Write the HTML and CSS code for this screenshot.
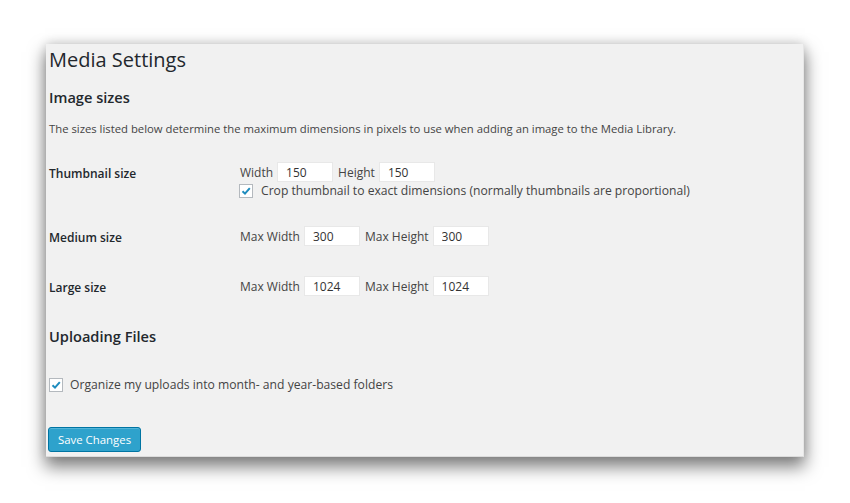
FILE: index.html
```html
<!DOCTYPE html>
<html lang="en">
<head>
  <meta charset="UTF-8" />
  <title>Media Settings</title>
  <link rel="stylesheet" href="styles.css">
</head>
<body>
  <div class="wrap">
    <h1>Media Settings</h1>

    <h3>Image sizes</h3>
    <p class="desc">The sizes listed below determine the maximum dimensions in pixels to use when adding an image to the Media Library.</p>

    <div class="row thumb">
      <div class="label">Thumbnail size</div>
      <div class="field">
        <div class="line">
          <span>Width</span><input type="text" value="150" class="small">
          <span>Height</span><input type="text" value="150" class="small">
        </div>
        <label class="check">
          <span class="box"><svg width="12" height="12" viewBox="0 0 12 12"><path d="M2.5 6.2 L5 8.6 L9.8 3.2" fill="none" stroke="#1e8cbe" stroke-width="2"/></svg></span>
          Crop thumbnail to exact dimensions (normally thumbnails are proportional)
        </label>
      </div>
    </div>

    <div class="row medium">
      <div class="label">Medium size</div>
      <div class="field">
        <div class="line">
          <span>Max Width</span><input type="text" value="300" class="small">
          <span>Max Height</span><input type="text" value="300" class="small">
        </div>
      </div>
    </div>

    <div class="row large">
      <div class="label">Large size</div>
      <div class="field">
        <div class="line">
          <span>Max Width</span><input type="text" value="1024" class="small">
          <span>Max Height</span><input type="text" value="1024" class="small">
        </div>
      </div>
    </div>

    <h3 class="uploads">Uploading Files</h3>
    <label class="check folders">
      <span class="box"><svg width="12" height="12" viewBox="0 0 12 12"><path d="M2.5 6.2 L5 8.6 L9.8 3.2" fill="none" stroke="#1e8cbe" stroke-width="2"/></svg></span>
      Organize my uploads into month- and year-based folders
    </label>

    <button type="button">Save Changes</button>
  </div>
</body>
</html>
```

FILE: styles.css
```css
html {
  background: #fff;
}
body {
  margin: 0;
  min-height: 503px;
  box-sizing: border-box;
  background: #fff;
  font-family: "Open Sans", sans-serif;
  color: #444;
  padding: 44px 0 46px 46px;
}
.wrap {
  width: 758px;
  height: 413px;
  padding-left: 3px;
  background: #f1f1f1;
  border-right: 1px solid #e6e6e6;
  border-bottom: 1px solid #dcdcdc;
  box-shadow: 0 9px 16px 1px rgba(0, 0, 0, 0.5), 0 -2px 10px rgba(0, 0, 0, 0.12);
  box-sizing: border-box;
}
h1 {
  margin: 0;
  padding-top: 2px;
  font-size: 20px;
  font-weight: 400;
  line-height: 28px;
  color: #23282d;
}
h3 {
  margin: 13px 0 0;
  font-size: 14.6px;
  font-weight: 600;
  line-height: 20px;
  color: #23282d;
}
.desc {
  margin: 13px 0 0;
  font-size: 11.3px;
  line-height: 18px;
}
.row {
  display: flex;
  margin-top: 24px;
  font-size: 12px;
}
.row.medium {
  margin-top: 27px;
}
.row.large {
  margin-top: 28px;
}
.label {
  width: 191px;
  font-weight: 600;
  color: #23282d;
  line-height: 20px;
  padding-top: 2px;
}
.line {
  display: flex;
  align-items: center;
  height: 20px;
}
.line span {
  margin-right: 4px;
}
.small {
  width: 56px;
  height: 20px;
  box-sizing: border-box;
  margin-right: 5px;
  padding: 0 8px;
  border: 1px solid #e8e8e8;
  background: #fff;
  font-family: "Open Sans", sans-serif;
  font-size: 12px;
  color: #333;
}
.check {
  display: flex;
  align-items: center;
  font-size: 12.15px;
}
.box {
  display: flex;
  align-items: center;
  justify-content: center;
  width: 14px;
  height: 14px;
  box-sizing: border-box;
  margin: 0 8px 0 -1px;
  border: 1px solid #b4b9be;
  background: #fff;
}
.uploads {
  margin-top: 28px;
}
.folders {
  margin-top: 30px;
}
.folders .box {
  margin-left: 0;
  margin-right: 7px;
}
button {
  display: block;
  margin-top: 34px;
  margin-left: -1px;
  height: 25px;
  padding: 0 9px;
  background: #2ea2cc;
  border: 1px solid #0074a2;
  border-radius: 3px;
  box-shadow: inset 0 1px 0 rgba(120, 200, 230, 0.5);
  color: #fff;
  font-family: "Open Sans", sans-serif;
  font-size: 11.4px;
}
```
